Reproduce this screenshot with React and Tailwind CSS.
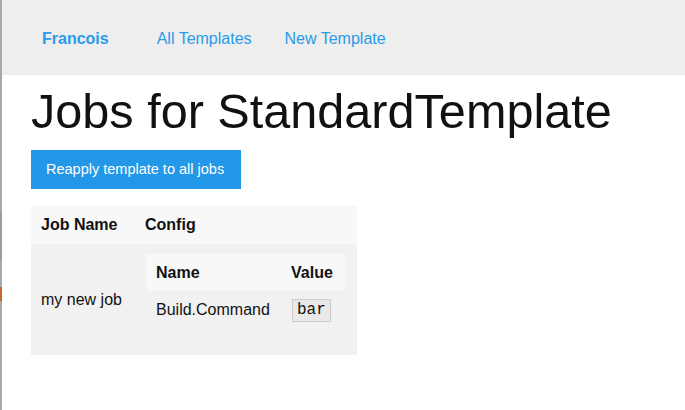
import React from "react";

const Edge = () => (
  <div className="flex w-[2px] flex-col bg-[#a9a9a9]">
    <div className="h-[212px]" />
    <div className="h-[48px] bg-[#9c9c9c]" />
    <div className="h-[27px]" />
    <div className="h-[14px] bg-[#c8692c]" />
    <div className="flex-1" />
  </div>
);

const App = () => {
  return (
    <div className="flex h-[410px] w-[685px] bg-white font-['Liberation_Sans',Arial,sans-serif] text-[#111]">
      <Edge />
      <div className="flex-1">
        <nav className="flex h-[75px] items-center bg-[#eeeeee] pt-[2px] text-[16px] text-[#2a9be9]">
          <a className="ml-[40px] font-bold">Francois</a>
          <a className="ml-[48px]">All Templates</a>
          <a className="ml-[33px]">New Template</a>
        </nav>

        <div className="pl-[29px]">
          <h1 className="mt-[7px] text-[48.6px] leading-[58px] font-normal text-[#111]">
            Jobs for StandardTemplate
          </h1>

          <button className="mt-[10px] flex h-[39px] w-[210px] items-center pl-[15px] text-[14.5px] text-white bg-[#2398e8]">
            Reapply template to all jobs
          </button>

          <table className="mt-[17px] w-[326px] border-collapse text-[16px] text-[#111]">
            <thead>
              <tr className="h-[38px] bg-[#f8f8f8]">
                <th className="w-[104px] pl-[10px] text-left font-bold">Job Name</th>
                <th className="pl-[10px] text-left font-bold">Config</th>
              </tr>
            </thead>
            <tbody>
              <tr className="h-[111px] bg-[#f1f1f1]">
                <td className="pl-[10px] align-middle">my new job</td>
                <td className="pl-[11px] pr-[12px] pt-[10px] pb-[27px] align-top">
                  <table className="w-[199px] border-collapse">
                    <thead>
                      <tr className="h-[37px] bg-[#f8f8f8]">
                        <th className="w-[135px] pl-[10px] text-left font-bold">Name</th>
                        <th className="pl-[10px] text-left font-bold">Value</th>
                      </tr>
                    </thead>
                    <tbody>
                      <tr className="h-[37px]">
                        <td className="pl-[10px]">Build.Command</td>
                        <td className="pl-[11px]">
                          <code className="inline-block h-[23px] border border-[#cccccc] bg-[#e9e9e9] px-[4px] font-['Liberation_Mono','Courier_New',monospace] text-[16px] leading-[21px]">
                            bar
                          </code>
                        </td>
                      </tr>
                    </tbody>
                  </table>
                </td>
              </tr>
            </tbody>
          </table>
        </div>
      </div>
    </div>
  );
};

export default App;
